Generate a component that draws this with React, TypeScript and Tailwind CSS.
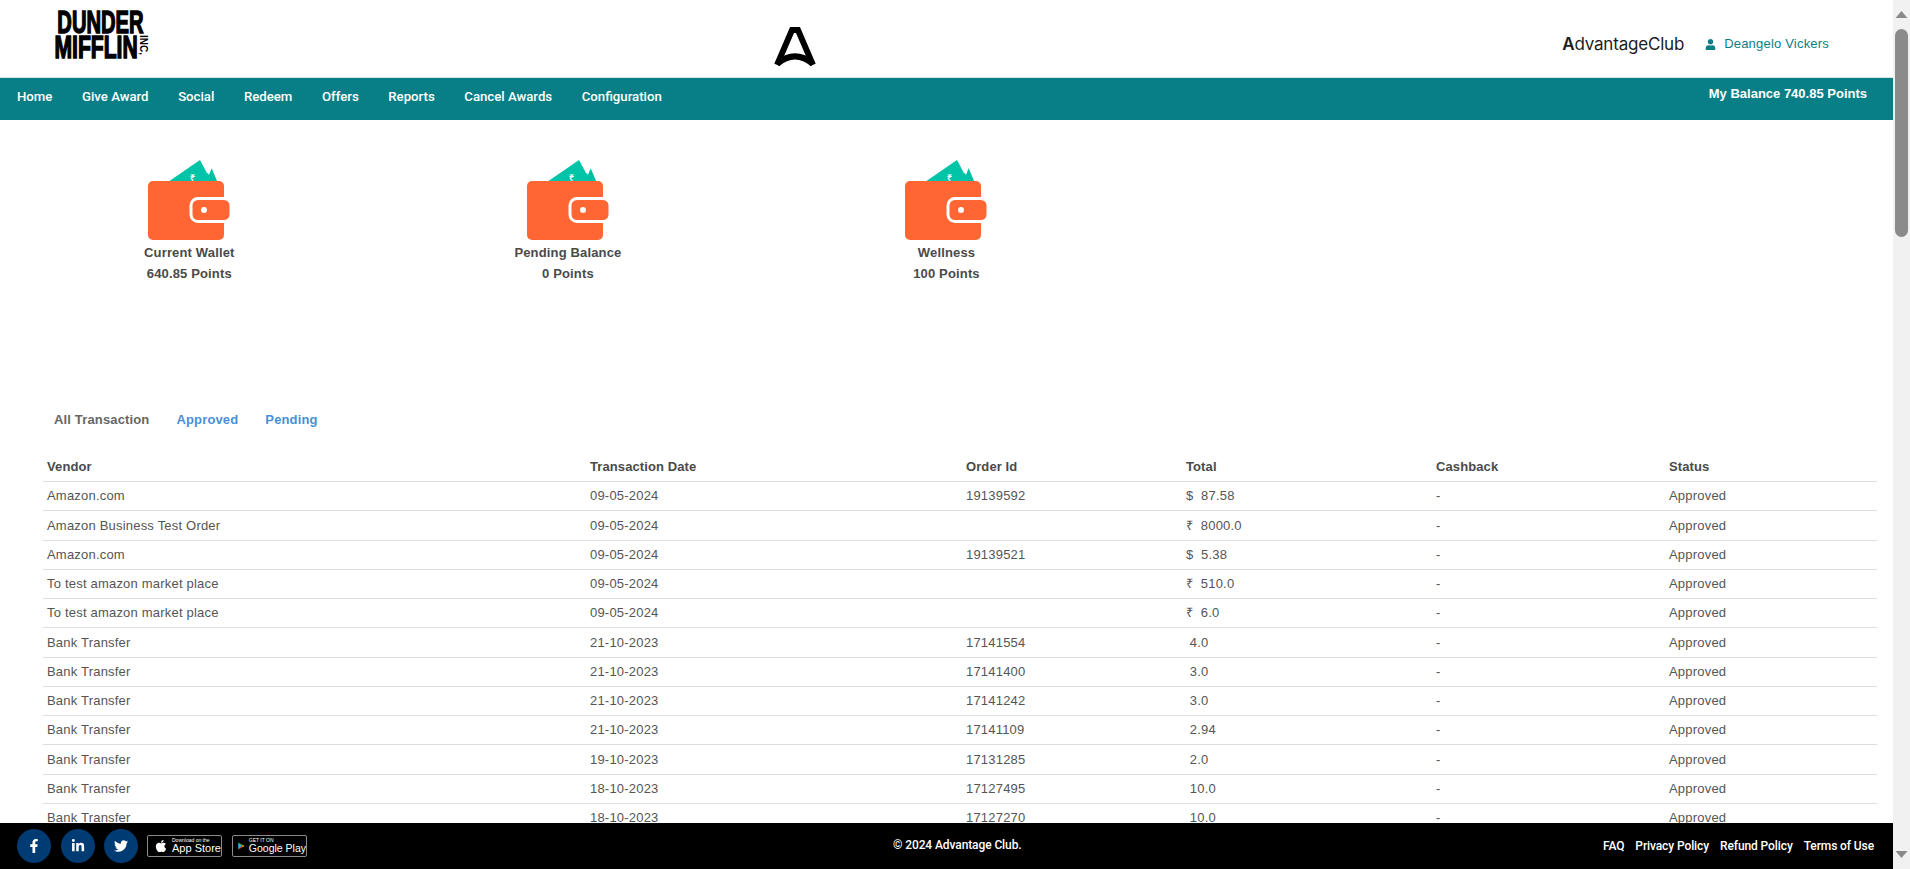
import React from 'react';
import { FaApple, FaFacebookF, FaLinkedinIn, FaTwitter, FaUser } from 'react-icons/fa';

const navItems = ['Home', 'Give Award', 'Social', 'Redeem', 'Offers', 'Reports', 'Cancel Awards', 'Configuration'];

const wallets = [
  { title: 'Current Wallet', points: '640.85 Points' },
  { title: 'Pending Balance', points: '0 Points' },
  { title: 'Wellness', points: '100 Points' },
];

const rows = [
  ['Amazon.com', '09-05-2024', '19139592', '$\u00a0\u00a087.58'],
  ['Amazon Business Test Order', '09-05-2024', '', '₹\u00a0\u00a08000.0'],
  ['Amazon.com', '09-05-2024', '19139521', '$\u00a0\u00a05.38'],
  ['To test amazon market place', '09-05-2024', '', '₹\u00a0\u00a0510.0'],
  ['To test amazon market place', '09-05-2024', '', '₹\u00a0\u00a06.0'],
  ['Bank Transfer', '21-10-2023', '17141554', '\u00a04.0'],
  ['Bank Transfer', '21-10-2023', '17141400', '\u00a03.0'],
  ['Bank Transfer', '21-10-2023', '17141242', '\u00a03.0'],
  ['Bank Transfer', '21-10-2023', '17141109', '\u00a02.94'],
  ['Bank Transfer', '19-10-2023', '17131285', '\u00a02.0'],
  ['Bank Transfer', '18-10-2023', '17127495', '\u00a010.0'],
  ['Bank Transfer', '18-10-2023', '17127270', '\u00a010.0'],
];

const cols = 'grid grid-cols-[543px_376px_220px_250px_233px_212px]';

const WalletIcon = () => (
  <svg width="84" height="82" viewBox="0 0 84 82">
    <path d="M58 22 L63.7 8.3 L69.5 22 Z" fill="#00bfa5" />
    <path d="M20 22 L52 0 L60 15 L52 22 Z" fill="#00c4a7" />
    <path d="M44 22 L60 13 L64 22 Z" fill="#00c4a7" />
    <text x="42" y="21" fontSize="9" fill="#ffffff" fontFamily="Liberation Sans, sans-serif">₹</text>
    <path d="M5 21 H71 a5 5 0 0 1 5 5 V75 a5 5 0 0 1 -5 5 H5 a5 5 0 0 1 -5 -5 V26 a5 5 0 0 1 5 -5 Z" fill="#ff6633" />
    <rect x="43" y="38.5" width="40" height="23" rx="7" fill="#ff6633" stroke="#ffffff" strokeWidth="3" />
    <circle cx="56" cy="50" r="3" fill="#ffffff" />
  </svg>
);

const LogoA = ({ size }: { size: number }) => (
  <svg width={size} height={size * 0.95} viewBox="0 0 42 40" fill="none" stroke="#000000" strokeWidth="6">
    <path d="M3 38 L18 3 H24 L39 38" />
    <path d="M3 37 Q21 22 39 37" />
  </svg>
);

const Arrow = ({ down }: { down?: boolean }) => (
  <svg width="13" height="9" viewBox="0 0 13 9" className={down ? 'rotate-180' : ''}>
    <path d="M6.5 1 L12.5 8 H0.5 Z" fill="#8a8a8a" />
  </svg>
);

const SocialButton = ({ children }: { children: React.ReactNode }) => (
  <div className="w-[34px] h-[34px] rounded-full bg-[#003b73] flex items-center justify-center text-white text-[14px]">
    {children}
  </div>
);

export default function App() {
  return (
    <div className="flex h-screen overflow-hidden bg-white font-['Liberation_Sans',Arial,sans-serif]">
      <div className="flex-1 min-w-0 flex flex-col">
        {/* top bar */}
        <header className="h-[77px] flex items-start shrink-0">
          <div className="w-[774px] pl-[55px] pt-[10px] shrink-0">
            <div className="relative w-[96px] h-[51px] text-black font-bold">
              <div className="h-[25px] w-[90px] flex items-center justify-center">
                <span className="text-[32px] leading-[23px] [-webkit-text-stroke:1.5px_#000] scale-x-[0.63] whitespace-nowrap">DUNDER</span>
              </div>
              <div className="h-[25px] w-[83px] flex items-center justify-center">
                <span className="text-[32px] leading-[23px] [-webkit-text-stroke:1.5px_#000] scale-x-[0.66] whitespace-nowrap">MIFFLIN</span>
              </div>
              <span className="absolute left-[76px] top-[29px] w-[24px] text-center text-[10px] leading-[12px] rotate-90">INC,</span>
            </div>
          </div>
          <div className="pt-[27px]">
            <LogoA size={42} />
          </div>
          <div className="ml-auto flex items-center h-[88px] pr-[64px]">
            <span className="text-[17px] leading-none text-[#1c1c1c] font-['Inter'] tracking-[-0.2px]">
              <span className="font-semibold">A</span>dvantageClub
            </span>
            <FaUser className="ml-[21px] text-[#087f87] text-[11px]" />
            <span className="ml-[8px] text-[13px] text-[#087f87] tracking-[0.2px]">Deangelo Vickers</span>
          </div>
        </header>

        {/* nav */}
        <nav className="h-[43px] shrink-0 bg-[#087f87] border-t border-[#d8e3e4] flex justify-between text-white">
          <ul className="flex gap-[29.6px] pl-[17px] pt-[10px] text-[13.2px] font-['Roboto'] font-medium leading-[17px]">
            {navItems.map((item) => (
              <li key={item}>{item}</li>
            ))}
          </ul>
          <div className="pr-[26px] pt-[7px] text-[13px] font-bold leading-[17px]">
            My Balance 740.85 Points
          </div>
        </nav>

        {/* content */}
        <main className="flex-1 min-h-0 overflow-hidden">
          <div className="grid grid-cols-5 pt-[40px] h-[290px]">
            {wallets.map((w) => (
              <div key={w.title} className="flex flex-col items-center text-[13px] font-bold text-[#4a4a4a] tracking-[0.15px]">
                <div className="ml-[2px]">
                  <WalletIcon />
                </div>
                <div className="leading-[21px]">{w.title}</div>
                <div className="leading-[21px]">{w.points}</div>
              </div>
            ))}
          </div>

          <div className="flex gap-[27px] pl-[54px] text-[13px] font-bold leading-[20px] tracking-[0.15px]">
            <span className="text-[#666666]">All Transaction</span>
            <span className="text-[#4a8fd8]">Approved</span>
            <span className="text-[#4a8fd8]">Pending</span>
          </div>

          <div className="ml-[43px] w-[1834px] mt-[23px] text-[13px] tracking-[0.2px] text-[#555555]">
            <div className={`${cols} h-[29px] items-center border-b border-[#dddddd] font-bold text-[#4a4a4a] tracking-[0.1px]`}>
              {['Vendor', 'Transaction Date', 'Order Id', 'Total', 'Cashback', 'Status'].map((h) => (
                <div key={h} className="pl-[4px]">{h}</div>
              ))}
            </div>
            {rows.map((r, i) => (
              <div key={i} className={`${cols} h-[29.25px] items-center border-b border-[#dddddd]`}>
                <div className="pl-[4px]">{r[0]}</div>
                <div className="pl-[4px]">{r[1]}</div>
                <div className="pl-[4px]">{r[2]}</div>
                <div className="pl-[4px]">{r[3]}</div>
                <div className="pl-[4px]">-</div>
                <div className="pl-[4px]">Approved</div>
              </div>
            ))}
          </div>
        </main>

        {/* footer */}
        <footer className="h-[46px] shrink-0 bg-black flex items-center justify-between relative text-white text-[12px] font-['Roboto'] pl-[17px] pr-[19px]">
          <div className="flex items-center">
            <div className="flex gap-[9.5px]">
              <SocialButton><FaFacebookF /></SocialButton>
              <SocialButton><FaLinkedinIn /></SocialButton>
              <SocialButton><FaTwitter /></SocialButton>
            </div>
            <div className="ml-[9px] w-[75px] h-[22px] border border-[#8a8a8a] rounded-[2px] flex items-center pl-[6px] gap-[4px] font-['Liberation_Sans']">
              <FaApple className="text-[14px]" />
              <div className="flex flex-col leading-none">
                <span className="text-[5px]">Download on the</span>
                <span className="text-[11px] font-medium whitespace-nowrap">App Store</span>
              </div>
            </div>
            <div className="ml-[10px] w-[75px] h-[22px] border border-[#8a8a8a] rounded-[2px] flex items-center pl-[5px] gap-[4px] font-['Liberation_Sans']">
              <svg width="13" height="14" viewBox="0 0 13 14">
                <path d="M0.5 0.5 L7 7 L0.5 13.5 Z" fill="#29b6f6" />
                <path d="M0.5 0.5 L9.5 5 L7 7 Z" fill="#4caf50" />
                <path d="M0.5 13.5 L9.5 9 L7 7 Z" fill="#f44336" />
                <path d="M9.5 5 L12.5 7 L9.5 9 L7 7 Z" fill="#ffc107" />
              </svg>
              <div className="flex flex-col leading-none">
                <span className="text-[5px]">GET IT ON</span>
                <span className="text-[10.5px] whitespace-nowrap">Google Play</span>
              </div>
            </div>
          </div>
          <div className="absolute left-[893px] top-[14px] font-medium leading-[16px] tracking-[-0.1px]">© 2024 Advantage Club.</div>
          <div className="flex gap-[11px] font-medium tracking-[-0.1px]">
            <span>FAQ</span>
            <span>Privacy Policy</span>
            <span>Refund Policy</span>
            <span>Terms of Use</span>
          </div>
        </footer>
      </div>

      {/* scrollbar */}
      <div className="w-[17px] shrink-0 bg-[#f1f1f1] flex flex-col items-center">
        <div className="h-[29px] flex items-center justify-center"><Arrow /></div>
        <div className="w-[13px] h-[208px] rounded-full bg-[#8b8b8b]" />
        <div className="mt-auto h-[29px] flex items-center justify-center"><Arrow down /></div>
      </div>
    </div>
  );
}
